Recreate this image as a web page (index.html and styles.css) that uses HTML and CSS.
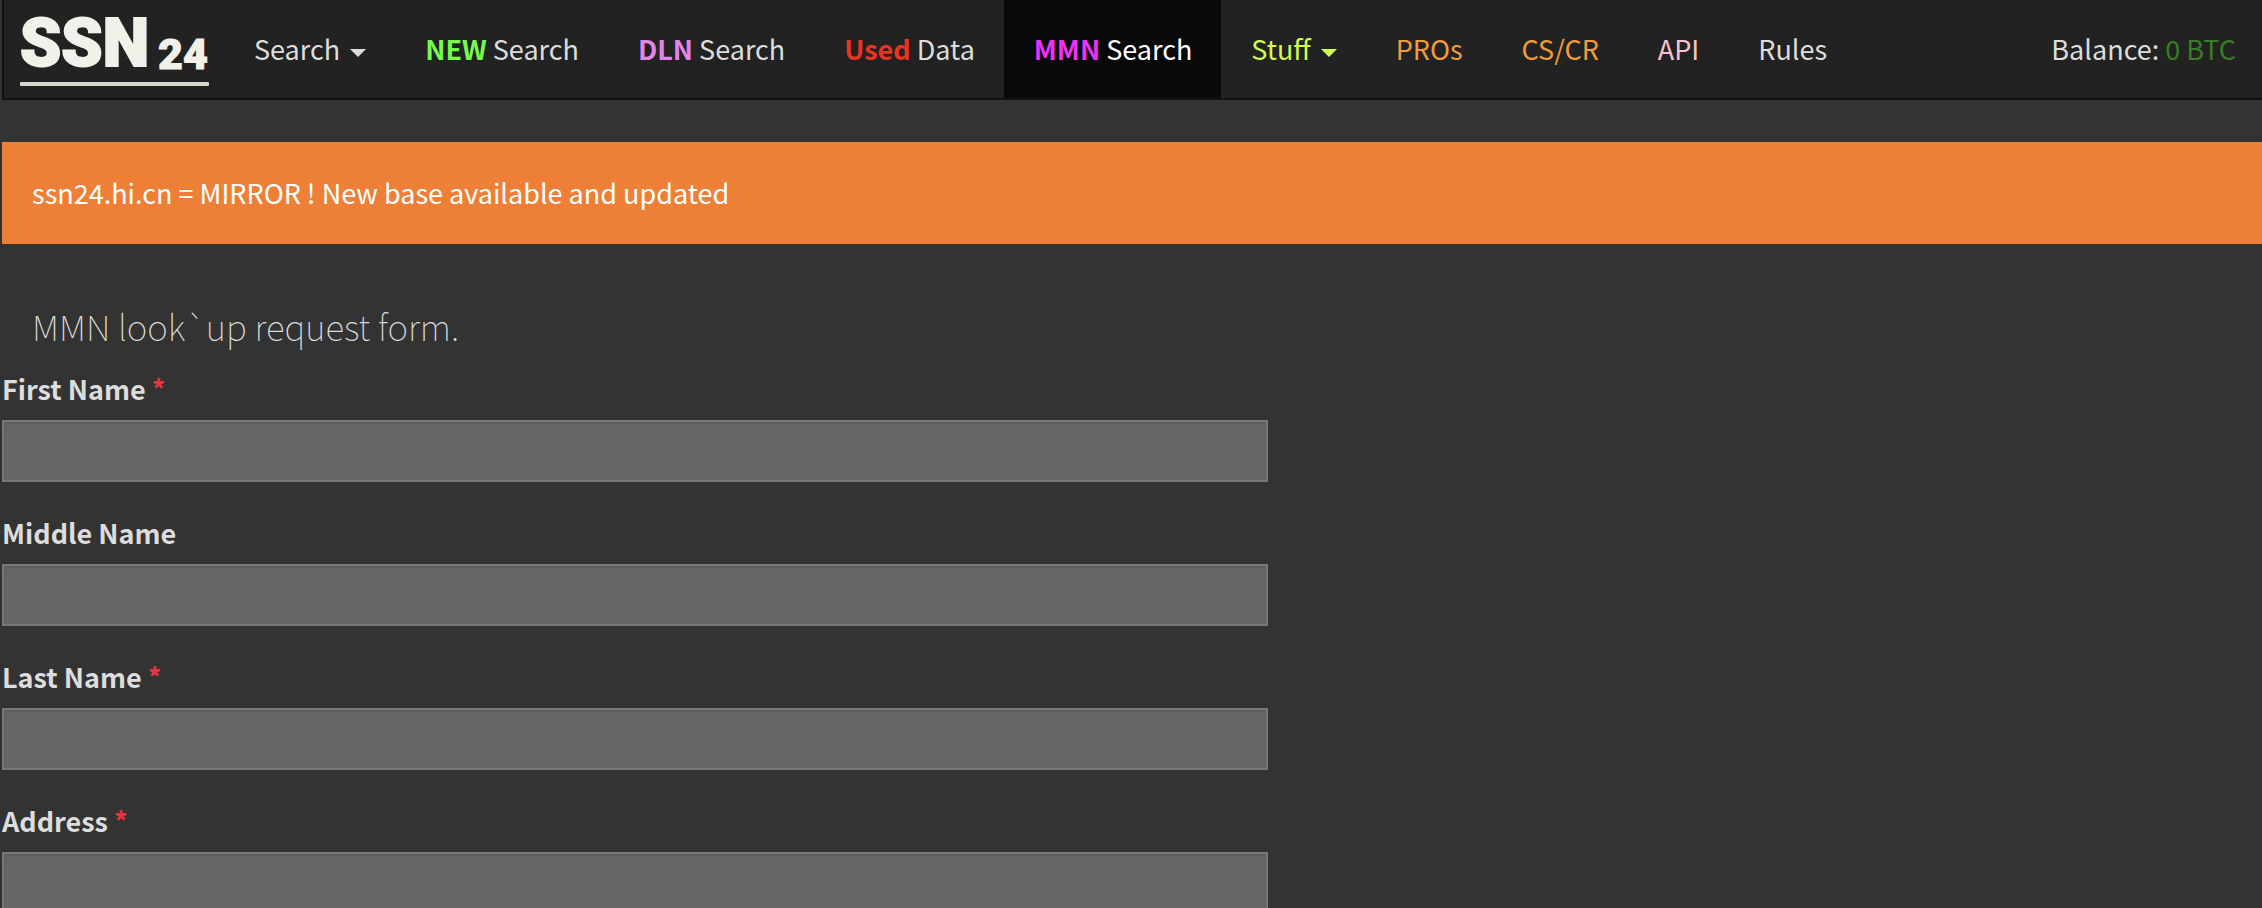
FILE: index.html
```html
<!DOCTYPE html>
<html lang="en">
<head>
<meta charset="utf-8">
<title>MMN Search</title>
<link rel="stylesheet" href="styles.css">
</head>
<body>
<header class="navbar">
  <a class="brand" href="#" aria-label="SSN 24">
    <svg class="logo" viewBox="0 0 192 88" aria-hidden="true">
      <text class="logo-main" x="0" y="66">SSN</text>
      <text class="logo-sub" x="138" y="69">24</text>
      <rect class="logo-line" x="0" y="82" width="189" height="4" rx="1"/>
    </svg>
  </a>
  <nav class="menu">
    <button class="item" type="button">Search<span class="caret"></span></button>
    <a class="item" href="#"><strong class="new">NEW</strong> Search</a>
    <a class="item" href="#"><strong class="dln">DLN</strong> Search</a>
    <a class="item" href="#"><strong class="used">Used</strong> Data</a>
    <a class="item active" href="#"><strong class="mmn">MMN</strong> Search</a>
    <button class="item lime" type="button">Stuff<span class="caret"></span></button>
    <a class="item orange" href="#">PROs</a>
    <a class="item orange" href="#">CS/CR</a>
    <a class="item pink" href="#">API</a>
    <a class="item" href="#">Rules</a>
  </nav>
  <p class="balance">Balance: <span class="amount">0 BTC</span></p>
</header>
<main>
  <p class="alert">ssn24.hi.cn = MIRROR ! New base available and updated</p>
  <h1 class="title">MMN look`up request form.</h1>
  <form class="form">
    <div class="field">
      <label for="first">First Name <span class="required">*</span></label>
      <input id="first" type="text">
    </div>
    <div class="field">
      <label for="middle">Middle Name</label>
      <input id="middle" type="text">
    </div>
    <div class="field">
      <label for="last">Last Name <span class="required">*</span></label>
      <input id="last" type="text">
    </div>
    <div class="field">
      <label for="address">Address <span class="required">*</span></label>
      <input id="address" type="text">
    </div>
  </form>
</main>
</body>
</html>
```
FILE: styles.css
```css
* { box-sizing: border-box; }

html { background: #333; }

body {
  margin: 0;
  padding-left: 2px;
  height: 100vh;
  overflow: hidden;
  background: #333;
  color: #ddd;
  font-family: "Noto Sans CJK SC", "Noto Sans", sans-serif;
  font-size: 27px;
  line-height: 42px;
}

.navbar {
  display: flex;
  align-items: stretch;
  height: 100px;
  background: #222;
  border-left: 2px solid #121212;
  border-bottom: 2px solid #121212;
}

.brand {
  display: block;
  padding: 0 12px 0 16px;
}

.logo {
  display: block;
  width: 192px;
  height: 88px;
  overflow: visible;
  fill: #f1f1ea;
  stroke: #f1f1ea;
  font-family: Roboto, sans-serif;
  font-weight: 900;
}

.logo-main {
  font-size: 66px;
  stroke-width: 2px;
}

.logo-sub {
  font-size: 43px;
  stroke-width: 1px;
}

.logo-line {
  fill: #d6d8ce;
  stroke: none;
}

.menu { display: flex; }

.item {
  display: block;
  padding: 28px 29px 28px 30px;
  border: 0;
  background: none;
  color: #ddd;
  font: inherit;
  text-decoration: none;
  white-space: pre;
}

.item.active {
  background: #090909;
  color: #fff;
}

.caret {
  display: inline-block;
  margin-left: 10px;
  border: 8px solid transparent;
  border-top-color: currentColor;
  border-bottom: 0;
  vertical-align: middle;
}

.new { color: #75fb4c; }
.dln { color: #e186e8; }
.used { color: #ea3323; }
.mmn { color: #ea33f7; }
.item.lime { color: #d0fb50; }
.item.orange { color: #f09d38; }
.item.pink { color: #f7c2cb; }

.balance {
  margin: 0 0 0 auto;
  padding: 28px 26px;
}

.amount { color: #377e22; }

.alert {
  margin: 42px 0 60px;
  padding: 30px;
  background: #ee7f37;
  color: #fff;
}

.title {
  margin: 0;
  padding-left: 30px;
  font-size: 35px;
  font-weight: 100;
  line-height: 44px;
}

.form { margin-top: 20px; }

.field {
  display: flex;
  flex-direction: column;
  gap: 10px;
  width: 56%;
  margin-bottom: 30px;
}

.field label { font-weight: 700; }

.required { color: #eb3342; }

.field input {
  width: 100%;
  height: 62px;
  padding: 8px 16px;
  border: 2px solid #777;
  border-radius: 0;
  background: #666;
  color: #ddd;
  font: inherit;
  box-shadow: inset 0 2px 2px rgba(0, 0, 0, 0.08);
}
```
